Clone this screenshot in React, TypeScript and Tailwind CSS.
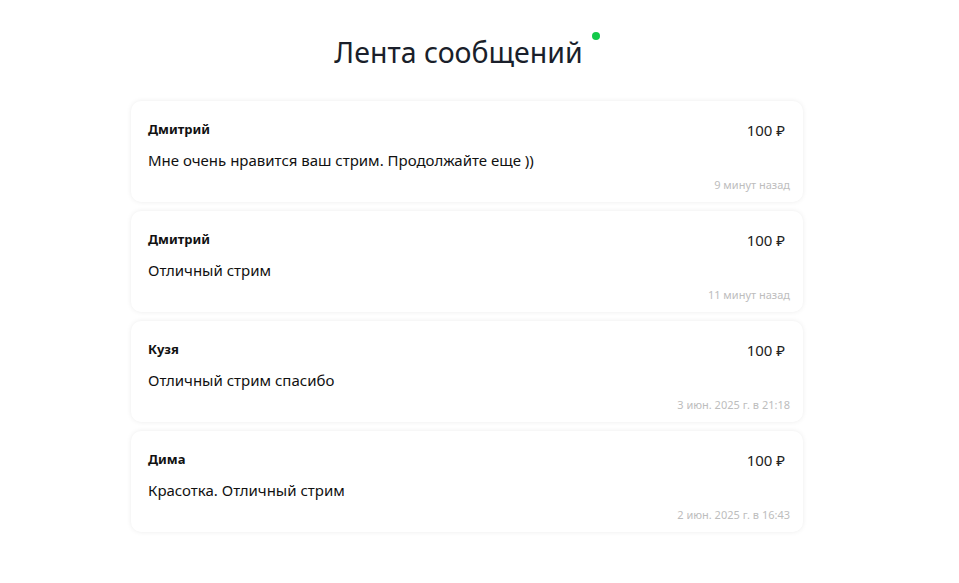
import React from 'react';

type Message = {
  name: string;
  amount: string;
  text: string;
  time: string;
};

const messages: Message[] = [
  { name: 'Дмитрий', amount: '100 ₽', text: 'Мне очень нравится ваш стрим. Продолжайте еще ))', time: '9 минут назад' },
  { name: 'Дмитрий', amount: '100 ₽', text: 'Отличный стрим', time: '11 минут назад' },
  { name: 'Кузя', amount: '100 ₽', text: 'Отличный стрим спасибо', time: '3 июн. 2025 г. в 21:18' },
  { name: 'Дима', amount: '100 ₽', text: 'Красотка. Отличный стрим', time: '2 июн. 2025 г. в 16:43' },
];

function MessageCard({ msg }: { msg: Message }) {
  return (
    <div className="rounded-[10px] bg-white shadow-[0_0_5px_rgba(0,0,0,0.08)] pl-[17px] pr-[13px] pt-[19px] pb-[9px]">
      <div className="flex items-center justify-between h-[20px]">
        <span className="text-[13px] font-bold text-[#111]">{msg.name}</span>
        <span className="text-[15px] text-[#222] mr-[5px]">{msg.amount}</span>
      </div>
      <p className="mt-[10px] text-[15px] leading-[20px] text-[#111]">{msg.text}</p>
      <div className="mt-[7px] text-right text-[11px] leading-[16px] text-[#bdbdbd]">{msg.time}</div>
    </div>
  );
}

export default function App() {
  return (
    <div className="min-h-screen bg-white font-['Noto_Sans','Open_Sans',sans-serif]">
      <div className="w-[672px] ml-[131px] pt-[30px]">
        <div className="flex justify-center items-start">
          <h1 className="text-[28.5px] leading-[44px] text-[#1a1f2b]">Лента сообщений</h1>
          <span className="ml-[9px] mt-[2px] h-[8px] w-[8px] rounded-full bg-[#13c94a]" />
        </div>
        <div className="mt-[27px] flex flex-col gap-[9px]">
          {messages.map((m, i) => (
            <MessageCard key={i} msg={m} />
          ))}
        </div>
      </div>
    </div>
  );
}
